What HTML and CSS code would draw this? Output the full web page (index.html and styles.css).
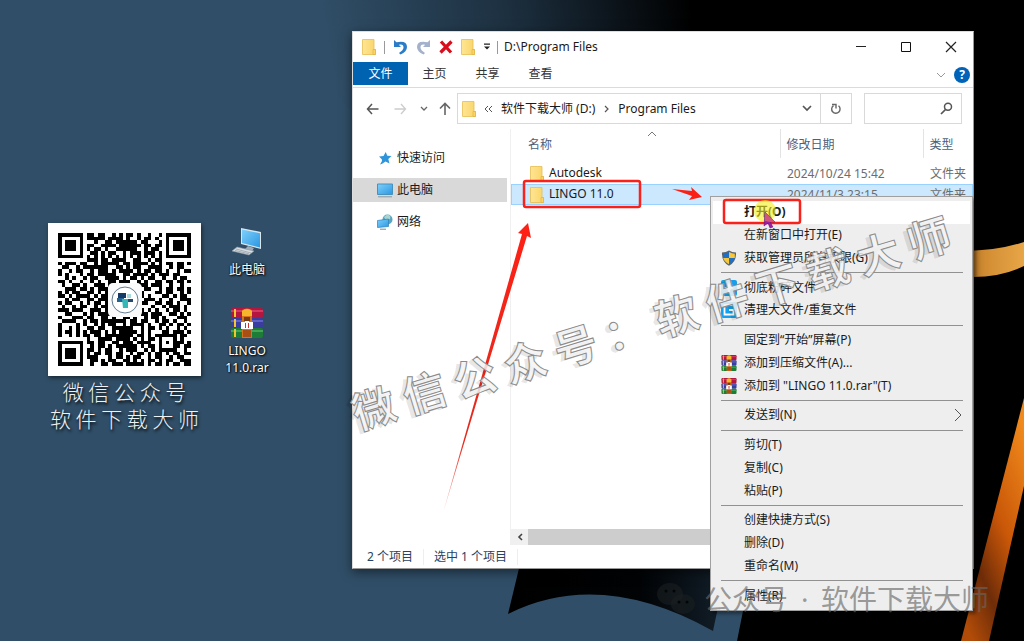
FILE: index.html
```html
<!DOCTYPE html>
<html lang="zh-CN">
<head>
<meta charset="utf-8">
<meta name="viewport" content="width=device-width, initial-scale=1">
<title>D:\Program Files</title>
<link rel="stylesheet" href="styles.css">
</head>
<body>
<svg class="defs" aria-hidden="true">
  <defs>
    <linearGradient id="gFolder" x1="0" x2="1"><stop offset="0" stop-color="#ffe693"/><stop offset="1" stop-color="#f9d468"/></linearGradient>
    <linearGradient id="gScreen" x1="0" y1="0" x2="1" y2="1"><stop offset="0" stop-color="#7fd0fb"/><stop offset="1" stop-color="#2a97e2"/></linearGradient>
  </defs>
  <symbol id="folder" viewBox="0 0 14 16"><path d="M.5 .5h11.500v10h1.500v5H.5z" fill="url(#gFolder)" stroke="#e6bd50" stroke-width=".8"/><path d="M11 10.500h2.500v5H11z" fill="#fbd462" stroke="#d9a93a" stroke-width=".5"/></symbol>
  <symbol id="rar" viewBox="0 0 34 30">
    <rect x="1" y="0" width="32" height="10" rx="2" fill="#b3173f"/><rect x="1" y="2" width="32" height="2" fill="#d23a62"/>
    <rect x="1" y="10" width="32" height="10" rx="2" fill="#3a3da0"/><rect x="1" y="12" width="32" height="2" fill="#6063c4"/>
    <rect x="1" y="20" width="32" height="10" rx="2" fill="#1d7c36"/><rect x="1" y="22" width="32" height="2" fill="#43a456"/>
    <path d="M4 1h2v8H4zM4 11h2v8H4zM4 21h2v8H4z" fill="#f4c531"/>
    <path d="M12 2q5-3 10 0v28H12z" fill="#d8741b"/><path d="M12 3q5-4 10 0v5H12z" fill="#f6b62c"/>
    <path d="M14 9h6v4h-6z" fill="#7b3a14"/><path d="M11 14h4v-1h4v1h4v7H11z" fill="#fff"/><path d="M15 15h1v5h-1zM18 15h1v5h-1z" fill="#c33"/>
    <path d="M13 22h8v7h-8z" fill="#a84f16"/>
  </symbol>
</svg>

<main class="desktop">
  <svg class="wallpaper" viewBox="0 0 1024 641" preserveAspectRatio="xMinYMin slice" aria-hidden="true">
    <defs>
      <linearGradient id="wTop" gradientUnits="userSpaceOnUse" x1="330" y1="60" x2="690" y2="0"><stop offset="0" stop-color="#304e67"/><stop offset=".5" stop-color="#1d3040"/><stop offset="1" stop-color="#000"/></linearGradient>
      <linearGradient id="wGold" x1="0" x2="1"><stop offset="0" stop-color="#c98229"/><stop offset="1" stop-color="#e7a648"/></linearGradient>
      <linearGradient id="wOrange" x1=".8" y1="0" x2=".2" y2="1"><stop offset="0" stop-color="#f08a1c"/><stop offset=".45" stop-color="#c95708"/><stop offset=".75" stop-color="#6e2c08"/><stop offset="1" stop-color="#b04b08"/></linearGradient>
      <linearGradient id="wDark" x1="0" x2="1"><stop offset="0" stop-color="#000"/><stop offset=".6" stop-color="#010305"/><stop offset="1" stop-color="#13202b"/></linearGradient>
    </defs>
    <rect width="1024" height="641" fill="#304e67"/>
    <path d="M300 0H1024V300H360V120L300 60z" fill="url(#wTop)"/>
    <path d="M760 200H1024V641H737L743 611z" fill="#000"/>
    <path d="M521 560H728L713 631Q600 568 508 614z" fill="url(#wDark)"/>
    <path d="M968 251Q1000 250 1024 242V266Q1000 278 968 277z" fill="url(#wGold)"/>
    <path d="M1024 398V486L989 641H961z" fill="url(#wOrange)"/>
  </svg>

  <section class="account">
    <div class="qr-card"><svg id="qr" viewBox="0 0 37 37" shape-rendering="crispEdges" role="img" aria-label="公众号二维码"></svg>
      <svg class="qr-logo" viewBox="0 0 34 34" aria-hidden="true"><rect width="34" height="34" rx="5" fill="#fafafa"/><circle cx="17" cy="17" r="13" fill="#fff" stroke="#627c93" stroke-width="1"/><path d="M10 10h8v5h-8z" fill="#153a68"/><path d="M9 15h7v4H9z" fill="#23638f"/><path d="M19 11h4v4h-4z" fill="#a7dad9"/><path d="M14 16h6v9h-5z" fill="#35b9b8"/><path d="M20 16h5v3h-5z" fill="#244a70"/></svg>
    </div>
    <p>微 信 公 众 号</p>
    <p>软 件 下 载 大 师</p>
  </section>

  <nav class="shortcuts" aria-label="桌面">
    <a href="#pc"><svg width="32" height="30" viewBox="0 0 32 30" aria-hidden="true"><path d="M10 1l20 4v17L10 17z" fill="#d9e6ee"/><path d="M11 2.500l18 3.700v14.300L11 16z" fill="url(#gScreen)"/><path d="M17 19l6 2-2 3-7-2z" fill="#9eacb8"/><path d="M6 20l17 4-5 4-17-4z" fill="#d7dde2" stroke="#8c98a3" stroke-width=".6"/><path d="M5 22l15 4M4 23.500l14 3.300" stroke="#8f9aa4" stroke-width=".7"/></svg><span>此电脑</span></a>
    <a href="#rar"><svg width="34" height="30" aria-hidden="true"><use href="#rar"/></svg><span>LINGO<br>11.0.rar</span></a>
  </nav>

  <section class="window">
    <header class="titlebar">
      <svg width="14" height="16" aria-hidden="true"><use href="#folder"/></svg>
      <i class="bar"></i>
      <button aria-label="撤销"><svg width="15" height="16" viewBox="0 0 15 16"><path d="M1 1v7h7L5.800 5.800Q10.500 4.500 10.500 8.500 10.500 11 6 14l1.500 1.500Q14 12.500 14 8 14 1 3.500 3.200z" fill="#2b7cc7"/></svg></button>
      <button aria-label="恢复"><svg width="15" height="16" viewBox="0 0 15 16"><path d="M14 1v7H7l2.200-2.200Q4.500 4.500 4.500 8.500 4.500 11 9 14l-1.500 1.500Q1 12.500 1 8 1 1 11.500 3.200z" fill="#a3b1cb"/></svg></button>
      <button aria-label="删除"><svg width="14" height="14" viewBox="0 0 14 14"><path d="M2 1.500L12 12.500M12.500 1.500L1.500 12.500" stroke="#d90d1c" stroke-width="3.200"/></svg></button>
      <button class="new-folder" aria-label="新建文件夹"><svg width="14" height="16"><use href="#folder"/></svg></button>
      <button class="qat" aria-label="自定义"><svg width="8" height="8" viewBox="0 0 8 8"><path d="M1 .5h6v1.200H1zM1 3.500h6L4 6.500z" fill="#222"/></svg></button>
      <i class="bar"></i>
      <h1>D:\Program Files</h1>
      <div class="controls">
        <button aria-label="最小化"><svg width="12" height="12"><path d="M1 5.500h10" stroke="#222"/></svg></button>
        <button aria-label="最大化"><svg width="12" height="12"><path d="M1.500 1.500h9v9h-9z" fill="none" stroke="#111"/></svg></button>
        <button aria-label="关闭"><svg width="12" height="12"><path d="M1 1l10 10M11 1L1 11" stroke="#222" stroke-width="1.200"/></svg></button>
      </div>
    </header>
    <nav class="ribbon">
      <button class="file-tab">文件</button><button>主页</button><button>共享</button><button>查看</button>
      <div class="ribbon-end">
        <button aria-label="展开功能区"><svg width="10" height="6"><path d="M1 1l4 4 4-4" fill="none" stroke="#999"/></svg></button>
        <button class="help" aria-label="帮助">?</button>
      </div>
    </nav>
    <div class="addressbar">
      <button aria-label="后退"><svg width="13" height="12"><path d="M6 1L1.500 6 6 11M1.500 6H12.500" fill="none" stroke="#555" stroke-width="1.500"/></svg></button>
      <button aria-label="前进"><svg width="13" height="12"><path d="M7 1l4.500 5L7 11M11.500 6H.5" fill="none" stroke="#ccc" stroke-width="1.300"/></svg></button>
      <button aria-label="最近位置"><svg width="8" height="6"><path d="M1 1l3 3 3-3" fill="none" stroke="#666" stroke-width="1.300"/></svg></button>
      <button aria-label="向上"><svg width="12" height="14"><path d="M1 6.500L6 1.500l5 5M6 2v11" fill="none" stroke="#666" stroke-width="1.600"/></svg></button>
      <div class="path">
        <svg width="14" height="16" aria-hidden="true"><use href="#folder"/></svg>
        <svg width="9" height="8" aria-hidden="true"><path d="M4 1L1 4l3 3M8 1L5 4l3 3" fill="none" stroke="#555"/></svg>
        <a href="#d">软件下载大师 (D:)</a>
        <svg class="crumb" width="5" height="8" aria-hidden="true"><path d="M1 1l3 3-3 3" fill="none" stroke="#555" stroke-width="1.200"/></svg>
        <a href="#pf">Program Files</a>
        <button class="drop" aria-label="历史记录"><svg width="10" height="7"><path d="M1 1l4 4 4-4" fill="none" stroke="#555" stroke-width="1.700"/></svg></button>
        <button class="refresh" aria-label="刷新"><svg width="12" height="12" viewBox="0 0 12 12"><path d="M8.500 2.800a4.200 4.200 0 1 1-5-.2" fill="none" stroke="#666" stroke-width="1.400"/><path d="M2 1.500h4v4" fill="none" stroke="#666" stroke-width="1.400"/></svg></button>
      </div>
      <div class="search"><input type="search" aria-label="搜索"><svg width="13" height="13" viewBox="0 0 13 13" aria-hidden="true"><circle cx="8" cy="4.800" r="3.500" fill="none" stroke="#555" stroke-width="1.500"/><path d="M5.500 7.500L1 12" stroke="#555" stroke-width="1.700"/></svg></div>
    </div>
    <div class="body">
      <nav class="tree">
        <a href="#quick"><svg width="16" height="16" viewBox="0 0 16 16"><path d="M8.700 2l1.600 3.800 4.200.3-3.200 3 1.200 4.400-4-2-3.300 2.200L3 14.500l2-3.500-.2-1.800L2 6.500l4.500-.6z" fill="#2f95db"/></svg>快速访问</a>
        <a href="#pc" class="selected"><svg width="16" height="16" viewBox="0 0 16 16"><path d="M.5 2h15v10.500H.5z" fill="url(#gScreen)" stroke="#4692bd"/><path d="M1 14.800h14" stroke="#8199a8" stroke-width="1"/></svg>此电脑</a>
        <a href="#net"><svg width="16" height="16" viewBox="0 0 16 16"><circle cx="10.500" cy="5.500" r="5" fill="#5ba4bf"/><path d="M7 3q3-3 5-2t1 4l-4 1z" fill="#a8d6cd"/><path d="M.5 6.500l11-1.500v7.500L.5 13.500z" fill="url(#gScreen)" stroke="#2e80b7" stroke-width=".7"/><path d="M3 15.200h6" stroke="#6f8c9b"/></svg>网络</a>
      </nav>
      <div class="files">
        <svg class="sort" width="10" height="6" aria-hidden="true"><path d="M1 5l4-4 4 4" fill="none" stroke="#777"/></svg>
        <table>
          <colgroup><col><col class="c-date"><col class="c-type"></colgroup>
          <thead><tr><th>名称</th><th>修改日期</th><th>类型</th></tr></thead>
          <tbody>
            <tr><td><svg width="14" height="16" aria-hidden="true"><use href="#folder"/></svg>Autodesk</td><td>2024/10/24 15:42</td><td>文件夹</td></tr>
            <tr class="selected"><td><svg width="14" height="16" aria-hidden="true"><use href="#folder"/></svg>LINGO 11.0</td><td>2024/11/3 23:15</td><td>文件夹</td></tr>
          </tbody>
        </table>
        <div class="scroll"><button aria-label="向左滚动"><svg width="6" height="8"><path d="M5 1L2 4l3 3" fill="none" stroke="#444" stroke-width="1.600"/></svg></button></div>
      </div>
    </div>
    <footer class="status"><span>2 个项目</span><span>选中 1 个项目</span></footer>
  </section>

  <div class="menu" role="menu">
    <button class="default" role="menuitem">打开(O)</button>
    <button role="menuitem">在新窗口中打开(E)</button>
    <button role="menuitem"><svg viewBox="0 0 16 16"><path d="M8 .5Q11 2.500 15 2.500 15.500 12 8 15.700.5 12 1 2.500 5 2.500 8 .5z" fill="#5b6570"/><path d="M8 2v6H2.200V3.700Q5 3.500 8 2z" fill="#1f6fc7"/><path d="M8 2q3 1.500 5.800 1.700V8H8z" fill="#f9c83a"/><path d="M2.200 8H8v6.300Q3.500 12 2.200 8z" fill="#f9c83a"/><path d="M8 8h5.800q-1 4-5.800 6.300z" fill="#1f6fc7"/></svg>获取管理员所有权限(G)</button>
    <hr>
    <button role="menuitem"><svg viewBox="0 0 16 16"><rect width="16" height="16" rx="2" fill="#159fec"/><path d="M8 2l1.500 4.500 4 1.500-4 1.500L8 14 6.500 9.500l-4-1.500 4-1.500z" fill="#fff"/></svg>彻底粉碎文件</button>
    <button role="menuitem"><svg viewBox="0 0 16 16"><rect width="16" height="16" rx="2" fill="#159fec"/><path d="M12 3H3.500v9.500h9V8H8" fill="none" stroke="#fff" stroke-width="1.800"/></svg>清理大文件/重复文件</button>
    <hr>
    <button role="menuitem">固定到“开始”屏幕(P)</button>
    <button role="menuitem"><svg viewBox="0 0 34 30" preserveAspectRatio="none"><use href="#rar" width="34" height="30"/></svg>添加到压缩文件(A)...</button>
    <button role="menuitem"><svg viewBox="0 0 34 30" preserveAspectRatio="none"><use href="#rar" width="34" height="30"/></svg>添加到 "LINGO 11.0.rar"(T)</button>
    <hr>
    <button role="menuitem" class="submenu">发送到(N)<svg viewBox="0 0 8 14"><path d="M1 1l6 6-6 6" fill="none" stroke="#555"/></svg></button>
    <hr>
    <button role="menuitem">剪切(T)</button>
    <button role="menuitem">复制(C)</button>
    <button role="menuitem">粘贴(P)</button>
    <hr>
    <button role="menuitem">创建快捷方式(S)</button>
    <button role="menuitem">删除(D)</button>
    <button role="menuitem">重命名(M)</button>
    <hr>
    <button role="menuitem">属性(R)</button>
  </div>

  <svg class="annotations" viewBox="0 0 1024 641" width="1024" height="641">
    <defs><linearGradient id="aFade" x1="0" y1="1" x2="0" y2="0"><stop offset="0" stop-color="#e22b1e" stop-opacity=".3"/><stop offset=".25" stop-color="#e22b1e"/><stop offset="1" stop-color="#ff2014"/></linearGradient></defs>
    <path d="M443 513L522 234 518 233 528 223 531 238 527 236z" fill="url(#aFade)"/>
    <g transform="translate(358 430) rotate(-17)">
      <text class="mark mark-shadow" x="-5" y="1">微 信 公 众 号 ： 软 件 下 载 大 师</text>
      <text class="mark" x="0" y="0">微 信 公 众 号 ： 软 件 下 载 大 师</text>
    </g>
    <rect x="524" y="181" width="116" height="26" rx="2" fill="none" stroke="#f9211a" stroke-width="2.500"/>
    <rect x="724" y="200" width="76" height="23" rx="2" fill="none" stroke="#f9211a" stroke-width="2.500"/>
    <path d="M672 189l20 2-1-4 11 10-13 3 3-4z" fill="#fb2015"/>
    <circle cx="765" cy="211" r="11" fill="#f5ee1c" fill-opacity=".6"/>
    <path d="M765 212l10 10h-5l3 5-3 1-2-5-4 3z" fill="#9c1fa8" stroke="#5a0c6c" stroke-width=".5"/>
    <path d="M765 212l10 10h-5l-5-1z" fill="#d0567d"/>
    <g fill="#1b2023" fill-opacity=".55"><ellipse cx="670" cy="594" rx="13" ry="11"/><ellipse cx="683" cy="604" rx="12" ry="10"/></g>
    <g fill="#000" fill-opacity=".8"><circle cx="666" cy="591" r="1.500"/><circle cx="674" cy="591" r="1.500"/><circle cx="679" cy="602" r="1.500"/><circle cx="687" cy="602" r="1.500"/></g>
    <text class="credit" y="610"><tspan x="704">公众号</tspan><tspan x="801">·</tspan><tspan x="821">软件下载大师</tspan></text>
  </svg>
</main>
<script src="script.js"></script>
</body>
</html>
```
FILE: styles.css
```css
* { box-sizing: border-box; }
body {
  margin: 0;
  font: 12px/16px "Noto Sans", "Noto Sans CJK SC", sans-serif;
  color: #1a1a1a;
}
button { font: inherit; color: inherit; background: none; border: 0; padding: 0; margin: 0; text-align: left; }
a { color: inherit; text-decoration: none; }
svg { display: block; flex: none; }
.defs { position: absolute; width: 0; height: 0; }

.desktop { position: relative; min-height: 100vh; overflow: hidden; background: #304e67; }
.wallpaper { position: absolute; inset: 0; width: 100%; height: 100%; }

.account { position: absolute; left: 48px; top: 223px; width: 153px; }
.qr-card { position: relative; padding: 10px; margin-bottom: 2px; background: #fff; box-shadow: 1px 2px 4px rgba(0, 0, 0, .5); }
.qr-logo { position: absolute; left: 60px; top: 60px; width: 34px; height: 34px; }
.account p {
  margin: 0;
  font: 21px/27px "Noto Sans CJK SC", sans-serif;
  font-weight: 300;
  color: #eef2f4;
  text-align: center;
  white-space: nowrap;
  text-shadow: 1px 2px 3px #000;
}

.shortcuts { position: absolute; left: 212px; top: 227px; width: 70px; display: grid; gap: 30px; }
.shortcuts a {
  display: grid;
  justify-items: center;
  gap: 4px;
  color: #fff;
  line-height: 17px;
  text-align: center;
  text-shadow: 1px 1px 2px #000, 0 0 2px #000;
}

.window {
  position: absolute;
  left: 352px;
  top: 31px;
  width: 622px;
  height: 538px;
  display: flex;
  flex-direction: column;
  background: #fff;
  border: 1px solid #999;
  border-color: #ddd #999 #999 #ddd;
  box-shadow: 0 3px 10px rgba(0, 0, 0, .5);
}
.titlebar { display: flex; align-items: center; height: 30px; padding-left: 9px; gap: 8px; }
.titlebar h1 { margin: 0 0 0 -2px; font-size: 12px; font-weight: 400; }
.bar { width: 1px; height: 13px; background: #999; }
.titlebar .qat { margin-right: -2px; }
.controls { display: flex; margin-left: auto; height: 100%; }
.controls button { width: 45px; display: grid; place-items: center; }

.ribbon { display: flex; height: 26px; border-bottom: 1px solid #dadbdc; }
.ribbon > button { width: 53px; height: 23px; text-align: center; color: #333; }
.ribbon > .file-tab { width: 55px; background: #0063b1; color: #fff; }
.ribbon-end { display: flex; align-items: center; gap: 8px; margin-left: auto; padding-right: 3px; }
.help { width: 16px; height: 16px; border-radius: 8px; background: #0063b8; color: #fff; font-weight: 700; text-align: center; }

.addressbar { display: flex; align-items: center; gap: 15px; margin: 5px 11px 0 13px; height: 31px; }
.addressbar > button:nth-child(3) { margin-left: -2px; margin-right: -4px; }
.path { display: flex; align-items: center; flex: 1; gap: 8px; height: 31px; margin-left: -9px; padding-left: 4px; border: 1px solid #d9d9d9; }
.path .crumb { margin: 0 1px; }
.path .drop { margin-left: auto; }
.path .refresh { display: grid; place-items: center; width: 31px; height: 100%; border-left: 1px solid #d9d9d9; }
.search { display: flex; align-items: center; width: 98px; height: 31px; padding-right: 8px; margin-left: -3px; border: 1px solid #d9d9d9; }
.search input { flex: 1; min-width: 0; border: 0; outline: 0; background: none; font: inherit; }

.body { display: flex; flex: 1; padding-top: 5px; }
.tree { width: 158px; padding-top: 17px; display: flex; flex-direction: column; gap: 8px; border-right: 1px solid #f0f0f0; }
.tree a { display: flex; align-items: center; gap: 4px; height: 24px; margin-right: 3px; padding-left: 24px; }
.tree .selected { background: #d9d9d9; }
.files { position: relative; flex: 1; display: flex; flex-direction: column; }
.sort { position: absolute; left: 136px; top: 2px; }
table { width: 100%; table-layout: fixed; border-collapse: collapse; }
.c-date { width: 143px; }
.c-type { width: 50px; }
th { height: 29px; padding: 2px 0 0 6px; font-weight: 400; text-align: left; color: #4c607a; border-left: 1px solid #e3e3e3; }
th:first-child { border: 0; padding-left: 17px; }
td { height: 21px; padding: 0 0 0 7px; color: #6d6d6d; white-space: nowrap; }
td:first-child { padding-left: 19px; color: #1a1a1a; }
td svg { display: inline-block; vertical-align: middle; margin-right: 5px; }
tbody::before { content: ""; display: block; height: 5px; }
tbody .selected { background: #cce8ff; outline: 1px solid #99d1ff; outline-offset: -1px; }
.scroll { display: flex; height: 16px; margin-top: auto; background: #cdcdcd; }
.scroll button { display: grid; place-items: center; width: 17px; background: #f0f0f0; }
.status { display: flex; height: 23px; padding-left: 14px; align-items: center; color: #2b4260; }
.status span { padding-right: 10px; margin-right: 10px; border-right: 1px solid #eee; }

.menu {
  position: absolute;
  left: 710px;
  top: 196px;
  width: 263px;
  height: 415px;
  display: flex;
  flex-direction: column;
  padding: 4px 2px 3px;
  background: #eee;
  border: 1px solid #a0a0a0;
  box-shadow: 3px 3px 3px rgba(0, 0, 0, .35);
}
.menu button { position: relative; flex: 1; display: flex; align-items: center; padding-left: 31px; }
.menu button svg { position: absolute; left: 8px; width: 16px; height: 16px; }
.menu .submenu svg { left: auto; right: 8px; width: 8px; height: 14px; }
.menu .default { background: #fff; font-weight: 700; }
.menu hr { width: 242px; height: 1px; margin: 3px auto; border: 0; background: #919191; }

.annotations { position: absolute; left: 0; top: 0; pointer-events: none; }
.mark { font: 700 43px "Noto Sans CJK SC", sans-serif; fill: #f4f4f4; fill-opacity: .85; stroke: #8b8b8b; stroke-width: 1px; }
.mark-shadow { fill: #000; fill-opacity: .1; stroke: none; }
.credit { font: 28px "Noto Sans", "Noto Sans CJK SC", sans-serif; fill: #666; fill-opacity: .65; }
```
FILE: script.js
```js
// Module matrix of the account QR code, one string per row.
const rows = [
  "#######.##.##..#.#.##.#..#..#.#######",
  "#.....#.#####.####.#..#.##.#..#.....#",
  "#.###.#...#..##.######.##...#.#.###.#",
  "#.###.#.##..####.######.##.##.#.###.#",
  "#.###.#.#.##.#..######..#.##..#.###.#",
  "#.....#..##.#.##..#.###.###.#.#.....#",
  "#######.#.#.#.#.#.#.#.#.#.#.#.#######",
  "........###.##.####..##..#.##........",
  "#.###.##..#.#####.##.####.#.#.##.##.#",
  ".##..#.#######..##.#.##..####..#.##..",
  "#..#.##..#.###.#.####.#.##.##.#..#.##",
  "#.#...#.##.#####..##.####.#.###.##...",
  "..#.#..#.##..####.#.##.#.##..#..#.##.",
  "##.#..#..#.#..##.###..#.#..##.##.##.#",
  ".#..##.#..###.###.#.#.###.###..#..#..",
  "..###.##.#.###........#.##..#.##.##.#",
  "#.#.##..##.#.##.......##...##.##..#.#",
  "##.#.####.#.##........##.#...##.#.##.",
  "..#.##..##.###........#.###.#..#..###",
  "#.##..#.#.##.#.........##..##.##.#..#",
  ".#..#.##..#.##........#...#..#.###.#.",
  "###.###..###.#........##.#.#..#.##.#.",
  "..##...#.#.####........##.###..##.#.#",
  "#...###.##..##.#..##.#..#.##.#...###.",
  ".####..#.##.#######.##.##..#.##.#..#.",
  "#....#.#..#.#.##..#.####.#..##.#.##.#",
  "#..#.#..##.##..######..#.##.#.#..#.#.",
  "#.##.#.#.###.#.#.#####.#.#...##.###.#",
  "#..#.#.##.##.########.##.#.######.##.",
  "........#..####.####.#.#.##.#...#.#..",
  "#######.##.##..##.###.####..#.#.###.#",
  "#.....#..#.##.#.######.#.##.#...##.##",
  "#.###.#.##.#.##..#.###..#.#.#####..#.",
  "#.###.#.#.##.##.##..#.##.#.##.#.##.##",
  "#.###.#.###...#.##.#.##..#.##..#.##..",
  "#.....#..##.#.##..##.#.#.##.#.##..###",
  "#######..#..##.###.#####.#.##.#.##.##"
];

const path = document.createElementNS("http://www.w3.org/2000/svg", "path");
let d = "";
rows.forEach((row, y) => {
  [...row].forEach((cell, x) => {
    if (cell === "#") d += `M${x} ${y}h1v1h-1z`;
  });
});
path.setAttribute("d", d);
document.getElementById("qr").appendChild(path);
```
